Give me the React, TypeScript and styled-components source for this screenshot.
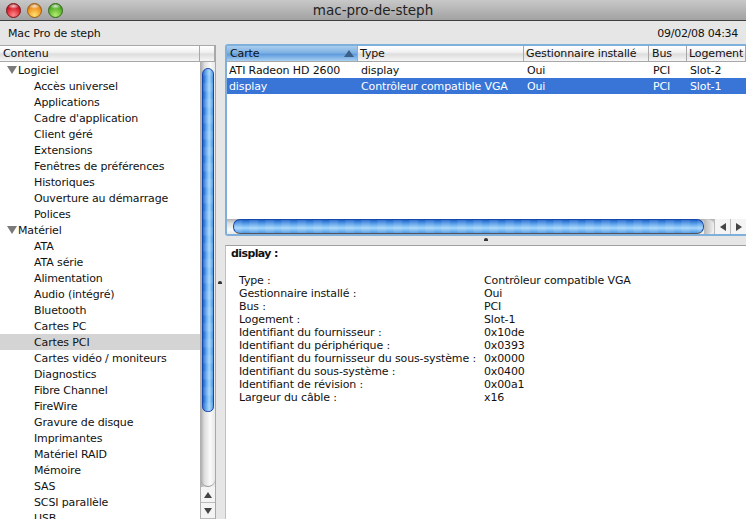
import { Fragment } from "react";
import styled, { createGlobalStyle } from "styled-components";

const GlobalStyle = createGlobalStyle`
  html, body {
    margin: 0;
    padding: 0;
    height: 100%;
    overflow: hidden;
    background: #e6e6e6;
  }
  #root {
    height: 100%;
  }
`;

const Window = styled.div`
  width: 746px;
  height: 519px;
  overflow: hidden;
  display: flex;
  flex-direction: column;
  background: #e6e6e6;
  color: #111;
  font-family: "DejaVu Sans", sans-serif;
  font-size: 11px;
  letter-spacing: -0.13px;
`;

const TitleBar = styled.div`
  height: 20px;
  flex: none;
  display: flex;
  align-items: center;
  position: relative;
  background: linear-gradient(#c8c8c8, #a2a2a2);
  border-bottom: 1px solid #404040;
`;

const Lights = styled.div`
  display: flex;
  gap: 6px;
  padding-left: 6px;
`;

const Light = styled.span<{ $c: string; $d: string; $l: string }>`
  width: 15px;
  height: 15px;
  border-radius: 50%;
  border: 1px solid ${(p) => p.$d};
  box-sizing: border-box;
  background:
    radial-gradient(ellipse 45% 22% at 50% 16%, #ffffffcc 0, #ffffff00 100%),
    radial-gradient(circle at 50% 85%, ${(p) => p.$l} 0, ${(p) => p.$c} 60%, ${(p) => p.$d} 100%);
`;

const WindowTitle = styled.div`
  position: absolute;
  left: 0;
  right: 0;
  text-align: center;
  font-size: 13.5px;
  letter-spacing: 0;
  color: #222;
`;

const InfoBar = styled.div`
  height: 24px;
  flex: none;
  display: flex;
  justify-content: space-between;
  align-items: center;
  padding: 0 8px;
`;

const DateText = styled.span`
  letter-spacing: -0.28px;
`;

const Main = styled.div`
  flex: 1;
  display: flex;
  min-height: 0;
`;

const Sidebar = styled.div`
  width: 216px;
  flex: none;
  display: flex;
  flex-direction: column;
  background: #fff;
  border-top: 1px solid #a8a8a8;
  border-right: 1px solid #a8a8a8;
  box-sizing: border-box;
`;

const HeaderCell = styled.div<{ $w?: number; $active?: boolean; $pad?: number }>`
  height: 15px;
  line-height: 15px;
  box-sizing: border-box;
  padding-left: ${(p) => p.$pad ?? 2}px;
  flex: ${(p) => (p.$w ? `0 0 ${p.$w}px` : "1")};
  border-right: 1px solid #a8a8a8;
  position: relative;
  background: ${(p) =>
    p.$active
      ? "linear-gradient(#a9cdee 0, #7fb1e3 45%, #5f9bdc 55%, #a8d0f2 100%)"
      : "linear-gradient(#fff 0, #f2f2f2 40%, #dedede 55%, #f6f6f6 100%)"};
`;

const HeaderRow = styled.div`
  display: flex;
  flex: none;
  border-bottom: 1px solid #a8a8a8;
`;

const SidebarBody = styled.div`
  flex: 1;
  display: flex;
  min-height: 0;
`;

const Tree = styled.div`
  flex: 1;
  overflow: hidden;
`;

const TreeRow = styled.div<{ $group?: boolean; $selected?: boolean }>`
  height: 16px;
  line-height: 18px;
  padding-left: ${(p) => (p.$group ? "18px" : "34px")};
  position: relative;
  white-space: nowrap;
  background: ${(p) => (p.$selected ? "#d4d4d4" : "transparent")};
`;

const Disclosure = styled.span`
  position: absolute;
  left: 7px;
  top: 4px;
  width: 0;
  height: 0;
  border-left: 5px solid transparent;
  border-right: 5px solid transparent;
  border-top: 8px solid #7a7a7a;
`;

const VScroll = styled.div`
  width: 15px;
  flex: none;
  display: flex;
  flex-direction: column;
  border-left: 1px solid #b0b0b0;
  box-sizing: border-box;
  background: linear-gradient(90deg, #b0b0b0, #dedede 25%, #fafafa 65%, #e8e8e8);
`;

const VThumb = styled.div`
  height: 344px;
  margin: 6px 1px 0 1px;
  flex: none;
  border-radius: 7px 7px 6px 6px;
  box-sizing: border-box;
  border: 1px solid #1548ad;
  background:
    repeating-linear-gradient(0deg, #ffffff1a 0 7px, #00000000 9px 15px, #ffffff1a 16px),
    linear-gradient(90deg, #1d62c8, #5aa0ea 30%, #a4d6fb 62%, #4b96e6);
`;

const VTrackEnd = styled.div`
  flex: 1;
  border-bottom: 1px solid #999;
  border-radius: 0 0 7px 7px;
`;

const ArrowBox = styled.div`
  height: 15px;
  flex: none;
  display: flex;
  align-items: center;
  justify-content: center;
  background: #f4f4f4;
  border-bottom: 1px solid #bbb;
`;

const Arrow = styled.span<{ $dir: "up" | "down" | "left" | "right" }>`
  width: 0;
  height: 0;
  ${(p) =>
    p.$dir === "up" || p.$dir === "down"
      ? `border-left: 4px solid transparent;
         border-right: 4px solid transparent;
         border-${p.$dir === "up" ? "bottom" : "top"}: 6px solid #444;`
      : `border-top: 4px solid transparent;
         border-bottom: 4px solid transparent;
         border-${p.$dir === "left" ? "right" : "left"}: 6px solid #444;`}
`;

const Splitter = styled.div`
  width: 9px;
  flex: none;
  position: relative;
`;

const Handle = styled.span`
  position: absolute;
  width: 4px;
  height: 3px;
  background: #333;
  border-radius: 2px 2px 0 0;
`;

const LeftHandle = styled(Handle)`
  left: 2px;
  top: 236px;
`;

const HSplitter = styled.div`
  height: 9px;
  flex: none;
  position: relative;
`;

const MidHandle = styled(Handle)`
  left: 259px;
  top: 2px;
`;

const Right = styled.div`
  flex: 1;
  display: flex;
  flex-direction: column;
  min-width: 0;
`;

const TablePanel = styled.div`
  height: 192px;
  flex: none;
  margin-top: -1px;
  display: flex;
  flex-direction: column;
  box-sizing: border-box;
  background: #fff;
  border: 2px solid #7fb0dc;
  border-right: none;
  border-radius: 3px 0 0 3px;
`;

const TableBody = styled.div`
  flex: 1;
`;

const Row = styled.div<{ $selected?: boolean }>`
  height: 16px;
  line-height: 18px;
  display: flex;
  background: ${(p) => (p.$selected ? "#3875d7" : "transparent")};
  color: ${(p) => (p.$selected ? "#fff" : "#111")};
`;

const Cell = styled.div<{ $w: number }>`
  flex: 0 0 ${(p) => p.$w}px;
  padding-left: 2px;
  box-sizing: border-box;
  white-space: nowrap;
  overflow: hidden;
`;

const SortArrow = styled.span`
  position: absolute;
  right: 3px;
  top: 4px;
  width: 0;
  height: 0;
  border-left: 5px solid transparent;
  border-right: 5px solid transparent;
  border-bottom: 7px solid #3c5f88;
`;

const HScroll = styled.div`
  height: 15px;
  flex: none;
  display: flex;
  box-sizing: border-box;
  background: linear-gradient(#b0b0b0, #e0e0e0 30%, #fafafa 70%, #e8e8e8);
`;

const HThumb = styled.div`
  flex: 1;
  margin: 0 0 0 6px;
  border-radius: 7px;
  box-sizing: border-box;
  border: 1px solid #1548ad;
  border-bottom-color: #555;
  background:
    repeating-linear-gradient(90deg, #ffffff1a 0 7px, #00000000 9px 15px, #ffffff1a 16px),
    linear-gradient(#1d62c8, #5aa0ea 30%, #a4d6fb 62%, #4b96e6);
`;

const ThumbCap = styled.div`
  width: 10px;
  flex: none;
  border-radius: 0 7px 7px 0;
  background: linear-gradient(90deg, #b8b8b8, #f0f0f0);
`;

const HButton = styled.div`
  width: 15px;
  flex: none;
  display: flex;
  align-items: center;
  justify-content: center;
  background: #f4f4f4;
  border-left: 1px solid #bbb;
`;

const Detail = styled.div`
  flex: 1;
  background: #fff;
  border-top: 1px solid #a0a0a0;
  border-left: 1px solid #c0c0c0;
  padding-left: 5px;
`;

const DetailTitle = styled.div`
  font-weight: bold;
  height: 14px;
  line-height: 16px;
  margin-bottom: 14px;
  letter-spacing: -0.6px;
`;

const DetailGrid = styled.div`
  display: grid;
  grid-template-columns: 245px 1fr;
  grid-auto-rows: 13px;
  line-height: 13px;
  padding-left: 8px;
`;

const columns = [132, 166, 126, 37, 60];

const software = [
  "Accès universel",
  "Applications",
  "Cadre d'application",
  "Client géré",
  "Extensions",
  "Fenêtres de préférences",
  "Historiques",
  "Ouverture au démarrage",
  "Polices",
];

const hardware = [
  "ATA",
  "ATA série",
  "Alimentation",
  "Audio (intégré)",
  "Bluetooth",
  "Cartes PC",
  "Cartes PCI",
  "Cartes vidéo / moniteurs",
  "Diagnostics",
  "Fibre Channel",
  "FireWire",
  "Gravure de disque",
  "Imprimantes",
  "Matériel RAID",
  "Mémoire",
  "SAS",
  "SCSI parallèle",
  "USB",
];

const details = [
  ["Type :", "Contrôleur compatible VGA"],
  ["Gestionnaire installé :", "Oui"],
  ["Bus :", "PCI"],
  ["Logement :", "Slot-1"],
  ["Identifiant du fournisseur :", "0x10de"],
  ["Identifiant du périphérique :", "0x0393"],
  ["Identifiant du fournisseur du sous-système :", "0x0000"],
  ["Identifiant du sous-système :", "0x0400"],
  ["Identifiant de révision :", "0x00a1"],
  ["Largeur du câble :", "x16"],
];

const rows = [
  ["ATI Radeon HD 2600", "display", "Oui", "PCI", "Slot-2"],
  ["display", "Contrôleur compatible VGA", "Oui", "PCI", "Slot-1"],
];

export default function App() {
  return (
    <Window>
      <GlobalStyle />
      <TitleBar>
        <Lights>
          <Light $c="#d81f2c" $d="#7c1118" $l="#ff8a8a" />
          <Light $c="#ee9420" $d="#9a5a12" $l="#ffe070" />
          <Light $c="#58b02c" $d="#2f6a18" $l="#b4ec70" />
        </Lights>
        <WindowTitle>mac-pro-de-steph</WindowTitle>
      </TitleBar>
      <InfoBar>
        <span>Mac Pro de steph</span>
        <DateText>09/02/08 04:34</DateText>
      </InfoBar>
      <Main>
        <Sidebar>
          <HeaderRow>
            <HeaderCell $pad={3}>Contenu</HeaderCell>
            <HeaderCell $w={15} />
          </HeaderRow>
          <SidebarBody>
            <Tree>
              <TreeRow $group>
                <Disclosure />
                Logiciel
              </TreeRow>
              {software.map((name) => (
                <TreeRow key={name}>{name}</TreeRow>
              ))}
              <TreeRow $group>
                <Disclosure />
                Matériel
              </TreeRow>
              {hardware.map((name) => (
                <TreeRow key={name} $selected={name === "Cartes PCI"}>
                  {name}
                </TreeRow>
              ))}
            </Tree>
            <VScroll>
              <VThumb />
              <VTrackEnd />
              <ArrowBox>
                <Arrow $dir="up" />
              </ArrowBox>
              <ArrowBox>
                <Arrow $dir="down" />
              </ArrowBox>
            </VScroll>
          </SidebarBody>
        </Sidebar>
        <Splitter>
          <LeftHandle />
        </Splitter>
        <Right>
          <TablePanel>
            <HeaderRow>
              <HeaderCell $w={131} $active $pad={3}>
                Carte
                <SortArrow />
              </HeaderCell>
              <HeaderCell $w={166}>Type</HeaderCell>
              <HeaderCell $w={125}>Gestionnaire installé</HeaderCell>
              <HeaderCell $w={38} $pad={3}>Bus</HeaderCell>
              <HeaderCell>Logement</HeaderCell>
            </HeaderRow>
            <TableBody>
              {rows.map((row) => (
                <Row key={row[1]} $selected={row[0] === "display"}>
                  {row.map((value, i) => (
                    <Cell key={i} $w={columns[i]}>
                      {value}
                    </Cell>
                  ))}
                </Row>
              ))}
            </TableBody>
            <HScroll>
              <HThumb />
              <ThumbCap />
              <HButton>
                <Arrow $dir="left" />
              </HButton>
              <HButton>
                <Arrow $dir="right" />
              </HButton>
            </HScroll>
          </TablePanel>
          <HSplitter>
            <MidHandle />
          </HSplitter>
          <Detail>
            <DetailTitle>display :</DetailTitle>
            <DetailGrid>
              {details.map(([label, value]) => (
                <Fragment key={label}>
                  <span>{label}</span>
                  <span>{value}</span>
                </Fragment>
              ))}
            </DetailGrid>
          </Detail>
        </Right>
      </Main>
    </Window>
  );
}
